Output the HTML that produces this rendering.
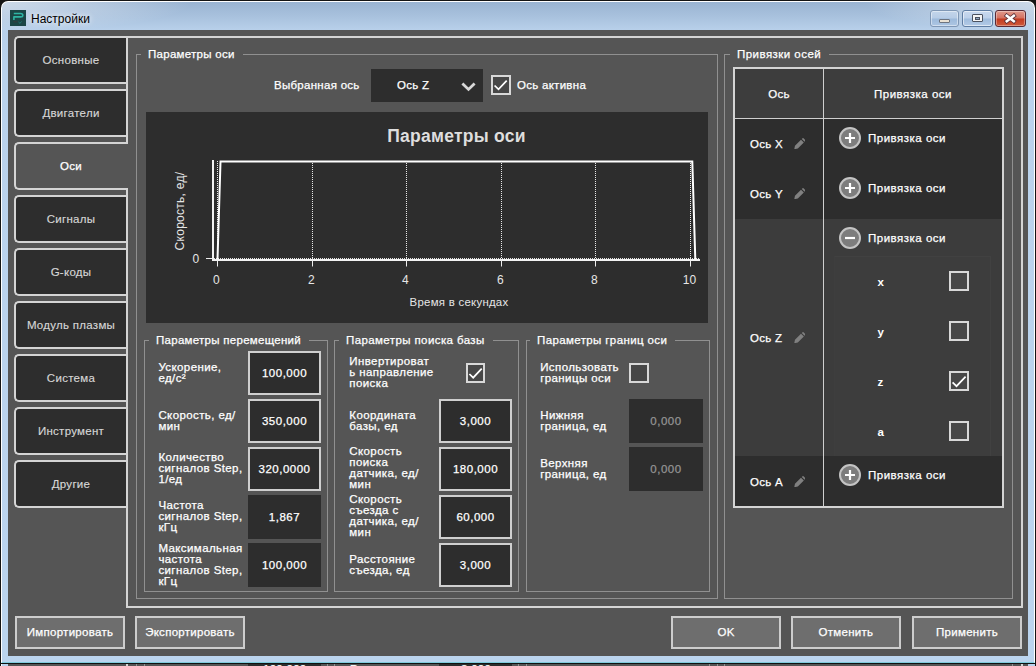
<!DOCTYPE html>
<html lang="ru"><head><meta charset="utf-8"><title>Настройки</title>
<style>
html,body{margin:0;padding:0}
body{-webkit-text-stroke:.25px;width:1036px;height:666px;overflow:hidden;position:relative;background:#555;font-family:"Liberation Sans",sans-serif;font-size:11.5px;letter-spacing:.28px;color:#fff;line-height:1}
.a{position:absolute;box-sizing:border-box}
.t{position:absolute;white-space:nowrap;line-height:12px}
.c{text-align:center}
/* window frame */
#under{left:0;top:663px;width:1036px;height:3px;background:#111;overflow:hidden}
#under i{position:absolute;top:1px;height:2px;display:block}
#under b{position:absolute;top:0px;font-weight:normal;line-height:12px;white-space:nowrap}
#frame{left:0;top:0;width:1036px;height:664px;background:#141414;}
#frameIn{left:1px;top:1px;width:1034px;height:662px;border-radius:7px 7px 0 0;background:radial-gradient(ellipse 190px 30px at 0 0,rgba(255,255,255,.5),rgba(255,255,255,0)),radial-gradient(ellipse 170px 30px at 100% 0,rgba(255,255,255,.5),rgba(255,255,255,0)),linear-gradient(#9ab4d2 0,#a8c1dd 14px,#b8d0ea 28px,#bad2ec 60px,#bbd4ee 100%);border:1px solid #fff;border-bottom:1px solid #7fcbdc}
#client{left:8px;top:30px;width:1020px;height:626px;background:#555}
#title{letter-spacing:0;-webkit-text-stroke:0;text-shadow:0 0 5px rgba(255,255,255,.85),0 0 9px rgba(255,255,255,.55);left:31px;top:11px;font-size:12px;color:#000;line-height:16px}
/* tabs */
.tab{left:14px;width:114px;height:48px;border:2px solid #d4d4d4;border-right:none;border-radius:5px 0 0 5px;background:#2d2d2d;color:#d6d6d6;-webkit-text-stroke:.15px;text-align:center;line-height:44px;padding-right:2px}
.tab.sel{background:#555;color:#fff;z-index:3;-webkit-text-stroke:.25px}
#pane{left:126px;top:36px;width:897px;height:572px;border:2px solid #d4d4d4}
.gb{border:1px solid #909090}
.lg{position:absolute;top:-7px;background:#555;padding:0 8px 0 7px;margin-left:-1px;line-height:12px;white-space:nowrap}
.dark{background:#2d2d2d}
.inp{border:2px solid #cfcfcf;background:#2d2d2d;text-align:center;line-height:41px;letter-spacing:.5px;width:73px;height:44px}
.inp.ro{border:none;line-height:45px}
.inp.dis{border:none;line-height:45px;color:#949494;width:74px}
.lbl{position:absolute;line-height:11px;white-space:nowrap;letter-spacing:.4px}
.cb{width:20px;height:20px;border:2px solid #d8d8d8;background:#474747}
.btn{top:616px;height:33px;border:2px solid #cdcdcd;background:#6e6e6e;text-align:center;line-height:29px}
</style></head><body>

<div class="a" id="frame"></div>
<div class="a" id="frameIn"></div>
<div class="a" id="client"></div>
<div class="a" id="under"><i style="left:1px;width:1034px;background:#b9d2ee"></i><i style="left:1px;width:1px;background:#fff"></i><i style="left:8px;width:1020px;background:#555"></i>
<i style="left:126px;width:2px;background:#d4d4d4"></i><i style="left:1021px;width:2px;background:#d4d4d4"></i>
<i style="left:136px;width:1px;background:#909090"></i><i style="left:144px;width:1px;background:#909090"></i><i style="left:327px;width:1px;background:#909090"></i><i style="left:334px;width:1px;background:#909090"></i><i style="left:518px;width:1px;background:#909090"></i><i style="left:526px;width:1px;background:#909090"></i><i style="left:709px;width:1px;background:#909090"></i><i style="left:717px;width:1px;background:#909090"></i><i style="left:724px;width:1px;background:#909090"></i><i style="left:1012px;width:1px;background:#909090"></i>
<i style="left:248px;width:73px;background:#2d2d2d"></i><i style="left:439px;width:73px;background:#2d2d2d"></i>
<b style="left:162px">частота</b><b style="left:263px">100,000</b><b style="left:350px">Расстояние</b><b style="left:461px">3,000</b></div>
<div class="t" id="title">Настройки</div>

<svg class="a" style="left:10px;top:10px" width="16" height="16" viewBox="0 0 16 16"><rect width="16" height="16" fill="#1c4646"/><path d="M3.800 3.500H10.600Q12.800 3.500 12.800 5.200Q12.800 6.900 10.600 6.900H3.900V9.900" fill="none" stroke="#2eb5a4" stroke-width="1.600" stroke-linejoin="round"/><path d="M8.500 12l1.400 1.300 1.800-1.700" fill="none" stroke="#23807a" stroke-width=".9"/><path d="M3.500 11.800h4" stroke="#3a3b3d" stroke-width="1"/></svg>
<div class="a" style="left:930px;top:10px;width:29px;height:17px;border:1px solid #7f97b5;border-radius:3px;background:linear-gradient(#c3d5ea 0,#b7cce6 48%,#9dbadb 52%,#adc6e3 100%);box-shadow:inset 0 0 0 1px rgba(255,255,255,.45)"></div>
<div class="a" style="left:939px;top:19px;width:11px;height:4px;background:#e9e1d3;border:1px solid #6d7480;border-radius:1px"></div>
<div class="a" style="left:962px;top:10px;width:31px;height:17px;border:1px solid #5f7da3;border-radius:3px;background:linear-gradient(#c9d9ee 0,#bcd0ea 48%,#9fbcdd 52%,#b3cae6 100%);box-shadow:inset 0 0 0 1px rgba(255,255,255,.55)"></div>
<div class="a" style="left:972px;top:14px;width:11px;height:8px;background:#f4f4f4;border:1px solid #4b5260;border-radius:1px"></div>
<div class="a" style="left:975px;top:17px;width:5px;height:3px;background:#8fa4bf;border:1px solid #4b5260"></div>
<div class="a" style="left:995px;top:10px;width:31px;height:17px;border:1px solid #5a2a35;border-radius:3px;background:linear-gradient(#e0998b 0,#d4705f 48%,#c23a20 52%,#cf5a3c 100%);box-shadow:inset 0 0 0 1px rgba(255,255,255,.35)"></div>
<svg class="a" style="left:1004px;top:13px" width="13" height="11" viewBox="0 0 13 11"><path d="M2.800 2.800L9.800 8.200M9.800 2.800L2.800 8.200" stroke="#5a3038" stroke-width="4.200" stroke-linecap="square"/><path d="M2.800 2.800L9.800 8.200M9.800 2.800L2.800 8.200" stroke="#fff" stroke-width="2.600" stroke-linecap="square"/></svg>

<div class="a tab" style="top:36px">Основные</div>
<div class="a tab" style="top:89px">Двигатели</div>
<div class="a tab sel" style="top:142px">Оси</div>
<div class="a tab" style="top:195px">Сигналы</div>
<div class="a tab" style="top:248px">G-коды</div>
<div class="a tab" style="top:301px">Модуль плазмы</div>
<div class="a tab" style="top:354px">Система</div>
<div class="a tab" style="top:407px">Инструмент</div>
<div class="a tab" style="top:460px">Другие</div>

<div class="a" id="pane"></div>

<div class="a gb" style="left:136px;top:54px;width:582px;height:545px"><span class="lg" style="left:5px">Параметры оси</span></div>
<div class="t" style="left:274px;top:79px">Выбранная ось</div>
<div class="a dark" style="left:371px;top:69px;width:112px;height:33px"></div>
<div class="t" style="left:397px;top:79px">Ось Z</div>
<svg class="a" style="left:460px;top:80.500px" width="17" height="12" viewBox="0 0 17 12"><path d="M2.400 2.400L8.500 8.400L14.600 2.400" fill="none" stroke="#d8d8d8" stroke-width="2.800"/></svg>
<div class="a cb" style="left:491px;top:75px;width:19.500px;height:20px"></div>
<svg class="a" style="left:491px;top:75px" width="20" height="20" viewBox="0 0 20 20"><path d="M3.600 10.500L7.500 14.400L15.700 5.700" fill="none" stroke="#fff" stroke-width="1.700"/></svg>
<div class="t" style="left:517px;top:79px">Ось активна</div>

<svg class="a" style="left:0;top:0" width="1036" height="666" viewBox="0 0 1036 666" font-family="Liberation Sans, sans-serif" font-size="12" fill="#e6e6e6" style="letter-spacing:0">
<rect x="146" y="112" width="562" height="211" fill="#2d2d2d"/>
<text x="456.5" y="142" text-anchor="middle" font-size="17.500" letter-spacing=".25" font-weight="bold" fill="#dedede" style="-webkit-text-stroke:0">Параметры оси</text>
<path d="M217.5 161V259" stroke="#e8e8e8" stroke-width="1" stroke-dasharray="1 1"/><path d="M312.5 161V259" stroke="#e8e8e8" stroke-width="1" stroke-dasharray="1 1"/><path d="M406.5 161V259" stroke="#e8e8e8" stroke-width="1" stroke-dasharray="1 1"/><path d="M501.5 161V259" stroke="#e8e8e8" stroke-width="1" stroke-dasharray="1 1"/><path d="M595.5 161V259" stroke="#e8e8e8" stroke-width="1" stroke-dasharray="1 1"/><path d="M690.5 161V259" stroke="#e8e8e8" stroke-width="1" stroke-dasharray="1 1"/>
<path d="M214 258.5H700" stroke="#e0e0e0" stroke-width="1" stroke-dasharray="1 1"/>
<path d="M213 160V260H700" fill="none" stroke="#f2f2f2" stroke-width="2"/>
<path d="M206 258.5H212" stroke="#ededed" stroke-width="1"/>
<path d="M217.5 260V266.5" stroke="#ededed" stroke-width="1"/><path d="M312.5 260V266.5" stroke="#ededed" stroke-width="1"/><path d="M406.5 260V266.5" stroke="#ededed" stroke-width="1"/><path d="M501.5 260V266.5" stroke="#ededed" stroke-width="1"/><path d="M595.5 260V266.5" stroke="#ededed" stroke-width="1"/><path d="M690.5 260V266.5" stroke="#ededed" stroke-width="1"/>
<path d="M217.500 259.500L220.500 161.500H692.300L695.300 259.500" fill="none" stroke="#fff" stroke-width="2" stroke-linejoin="miter"/>
<text x="199.500" y="263" text-anchor="end">0</text>
<text x="216.6" y="284.2" text-anchor="middle">0</text><text x="311.6" y="284.2" text-anchor="middle">2</text><text x="405.6" y="284.2" text-anchor="middle">4</text><text x="500.6" y="284.2" text-anchor="middle">6</text><text x="594.6" y="284.2" text-anchor="middle">8</text><text x="689.6" y="284.2" text-anchor="middle">10</text>
<text x="459" y="305.500" text-anchor="middle" font-size="11.400">Время в секундах</text>
<text transform="translate(184 211) rotate(-90)" text-anchor="middle">Скорость, ед/</text>
</svg>

<div class="a gb" style="left:144px;top:340px;width:184px;height:252px"><span class="lg" style="left:5px">Параметры перемещений</span></div>
<div class="a gb" style="left:334px;top:340px;width:185px;height:252px"><span class="lg" style="left:5px;letter-spacing:.4px">Параметры поиска базы</span></div>
<div class="a gb" style="left:526px;top:340px;width:184px;height:252px"><span class="lg" style="left:4px;letter-spacing:.38px">Параметры границ оси</span></div>

<div class="lbl" style="left:158.400px;top:362px">Ускорение,<br>ед/с²</div>
<div class="a inp" style="left:248px;top:351px">100,000</div>
<div class="lbl" style="left:158.400px;top:410px">Скорость, ед/<br>мин</div>
<div class="a inp" style="left:248px;top:399px">350,000</div>
<div class="lbl" style="left:158.400px;top:452px">Количество<br>сигналов Step,<br>1/ед</div>
<div class="a inp" style="left:248px;top:447px">320,0000</div>
<div class="lbl" style="left:158.400px;top:500px">Частота<br>сигналов Step,<br>кГц</div>
<div class="a inp ro" style="left:248px;top:495px">1,867</div>
<div class="lbl" style="left:158.400px;top:543px">Максимальная<br>частота<br>сигналов Step,<br>кГц</div>
<div class="a inp ro" style="left:248px;top:543px">100,000</div>

<div class="lbl" style="left:349.300px;top:356px">Инвертироват<br>ь направление<br>поиска</div>
<div class="a cb" style="left:466px;top:363px;width:19px;height:20px"></div>
<svg class="a" style="left:466px;top:363px" width="20" height="20" viewBox="0 0 20 20"><path d="M3.400 11L7.200 14.700L15.700 5.600" fill="none" stroke="#fff" stroke-width="1.7"/></svg>
<div class="lbl" style="left:349.300px;top:410px">Координата<br>базы, ед</div>
<div class="a inp" style="left:439px;top:399px">3,000</div>
<div class="lbl" style="left:349.300px;top:446px">Скорость<br>поиска<br>датчика, ед/<br>мин</div>
<div class="a inp" style="left:439px;top:447px">180,000</div>
<div class="lbl" style="left:349.300px;top:494px">Скорость<br>съезда с<br>датчика, ед/<br>мин</div>
<div class="a inp" style="left:439px;top:495px">60,000</div>
<div class="lbl" style="left:349.300px;top:554px">Расстояние<br>съезда, ед</div>
<div class="a inp" style="left:439px;top:543px">3,000</div>

<div class="lbl" style="left:540.200px;top:362px">Использовать<br>границы оси</div>
<div class="a cb" style="left:629px;top:363px;width:20px;height:20px"></div>
<div class="lbl" style="left:540.200px;top:410px">Нижняя<br>граница, ед</div>
<div class="a inp dis" style="left:629px;top:399px">0,000</div>
<div class="lbl" style="left:540.200px;top:458px">Верхняя<br>граница, ед</div>
<div class="a inp dis" style="left:629px;top:447px">0,000</div>


<div class="a gb" style="left:724px;top:54px;width:289px;height:545px"><span class="lg" style="left:6px;letter-spacing:.46px">Привязки осей</span></div>
<div class="a" style="left:733px;top:67px;width:271px;height:441px;background:#2d2d2d"></div>
<div class="a" style="left:735px;top:69px;width:267px;height:49px;background:#3d3d3d"></div>
<div class="a" style="left:735px;top:219px;width:267px;height:237px;background:#3c3c3c"></div>
<div class="a" style="left:834px;top:256px;width:157px;height:200px;background:#3d3d3d;border:1px solid #414141;border-bottom:none;border-left-color:#3e3e3e"></div>
<div class="a" style="left:735px;top:118px;width:267px;height:1px;background:#cfcfcf"></div>
<div class="a" style="left:823px;top:69px;width:1px;height:437px;background:#cfcfcf"></div>
<div class="a" style="left:733px;top:67px;width:271px;height:441px;border:2px solid #d4d4d4"></div>
<div class="t c" style="left:735px;width:88px;top:88px">Ось</div>
<div class="t c" style="left:824px;width:178px;top:88px;letter-spacing:.5px">Привязка оси</div>
<div class="t" style="left:750px;top:138px">Ось X</div><svg class="a" style="left:793.500px;top:137.7px" width="11.500" height="11.500" viewBox="0 0 13 13"><path d="M0.300 12.700L1.100 8.700L7.900 1.900L11.100 5.100L4.300 11.900Z M8.800 1L9.700 0.200Q10.200 -0.200 10.700 0.200L12.800 2.300Q13.200 2.800 12.800 3.300L12 4.200Z" fill="#808080"/></svg>
<div class="t" style="left:750px;top:188px">Ось Y</div><svg class="a" style="left:793.500px;top:187.7px" width="11.500" height="11.500" viewBox="0 0 13 13"><path d="M0.300 12.700L1.100 8.700L7.900 1.900L11.100 5.100L4.300 11.900Z M8.800 1L9.700 0.200Q10.200 -0.200 10.700 0.200L12.800 2.300Q13.200 2.800 12.800 3.300L12 4.200Z" fill="#808080"/></svg>
<div class="t" style="left:750px;top:332px">Ось Z</div><svg class="a" style="left:793.500px;top:331.7px" width="11.500" height="11.500" viewBox="0 0 13 13"><path d="M0.300 12.700L1.100 8.700L7.900 1.900L11.100 5.100L4.300 11.900Z M8.800 1L9.700 0.200Q10.200 -0.200 10.700 0.200L12.800 2.300Q13.200 2.800 12.800 3.300L12 4.200Z" fill="#808080"/></svg>
<div class="t" style="left:750px;top:476px">Ось A</div><svg class="a" style="left:793.500px;top:475.7px" width="11.500" height="11.500" viewBox="0 0 13 13"><path d="M0.300 12.700L1.100 8.700L7.900 1.900L11.100 5.100L4.300 11.900Z M8.800 1L9.700 0.200Q10.200 -0.200 10.700 0.200L12.800 2.300Q13.200 2.800 12.800 3.300L12 4.200Z" fill="#808080"/></svg>
<svg class="a" style="left:838px;top:126px" width="24" height="24" viewBox="-12 -12 24 24"><circle r="10" fill="#7d7d7d" stroke="#c4c4c4" stroke-width="2"/><path d="M-5 0H5M0 -5V5" stroke="#fff" stroke-width="2.2"/></svg><div class="t" style="left:868px;top:132px;letter-spacing:.5px">Привязка оси</div>
<svg class="a" style="left:838px;top:176px" width="24" height="24" viewBox="-12 -12 24 24"><circle r="10" fill="#7d7d7d" stroke="#c4c4c4" stroke-width="2"/><path d="M-5 0H5M0 -5V5" stroke="#fff" stroke-width="2.2"/></svg><div class="t" style="left:868px;top:182px;letter-spacing:.5px">Привязка оси</div>
<svg class="a" style="left:838px;top:226px" width="24" height="24" viewBox="-12 -12 24 24"><circle r="10" fill="#7d7d7d" stroke="#c4c4c4" stroke-width="2"/><path d="M-5 0H5" stroke="#fff" stroke-width="2.2"/></svg><div class="t" style="left:868px;top:232px;letter-spacing:.5px">Привязка оси</div>
<svg class="a" style="left:838px;top:463px" width="24" height="24" viewBox="-12 -12 24 24"><circle r="10" fill="#7d7d7d" stroke="#c4c4c4" stroke-width="2"/><path d="M-5 0H5M0 -5V5" stroke="#fff" stroke-width="2.2"/></svg><div class="t" style="left:868px;top:469px;letter-spacing:.5px">Привязка оси</div>
<div class="t" style="left:877.500px;top:276px;font-weight:bold;-webkit-text-stroke:0">x</div><div class="a cb" style="left:949px;top:271px"></div>
<div class="t" style="left:877.500px;top:326px;font-weight:bold;-webkit-text-stroke:0">y</div><div class="a cb" style="left:949px;top:321px"></div>
<div class="t" style="left:877.500px;top:376px;font-weight:bold;-webkit-text-stroke:0">z</div><div class="a cb" style="left:949px;top:371px"></div>
<svg class="a" style="left:949px;top:371px" width="20" height="20" viewBox="0 0 20 20"><path d="M3.600 11.300L7.500 15.200L16.600 5.600" fill="none" stroke="#fff" stroke-width="1.7"/></svg>
<div class="t" style="left:877.500px;top:426px;font-weight:bold;-webkit-text-stroke:0">a</div><div class="a cb" style="left:949px;top:421px"></div>


<div class="a btn" style="left:15px;width:110px">Импортировать</div>
<div class="a btn" style="left:135px;width:110px">Экспортировать</div>
<div class="a btn" style="left:671px;width:110px">OK</div>
<div class="a btn" style="left:791px;width:110px">Отменить</div>
<div class="a btn" style="left:912px;width:110px">Применить</div>

</body></html>
